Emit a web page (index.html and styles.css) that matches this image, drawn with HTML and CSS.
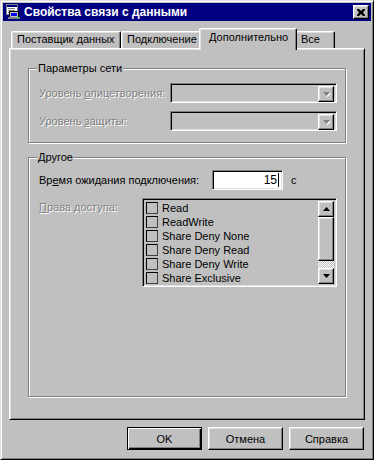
FILE: index.html
```html
<!DOCTYPE html>
<html lang="ru">
<head>
    <meta charset="UTF-8">
    <title>Свойства связи с данными</title>
    <link rel="stylesheet" href="styles.css">
</head>
<body>
    <div class="window">
        <!-- Title bar -->
        <div class="titlebar">
            <svg class="app-icon" width="16" height="16" viewBox="0 0 16 16">
                <rect x="1.5" y="0.5" width="11" height="10" fill="#fff" stroke="#808080"/>
                <rect x="2" y="1" width="10" height="2" fill="#000080"/>
                <rect x="3" y="4" width="7" height="1" fill="#808080"/>
                <rect x="3" y="6" width="7" height="1" fill="#808080"/>
                <rect x="3" y="8" width="5" height="1" fill="#808080"/>
                <rect x="4.5" y="7.5" width="9" height="6" fill="#c0c0c0" stroke="#000"/>
                <rect x="6" y="9" width="6" height="3" fill="#0000ff"/>
                <rect x="3" y="13" width="12" height="2" fill="#808080"/>
                <rect x="12" y="13" width="2" height="1" fill="#00ff00"/>
            </svg>
            <span class="title">Свойства связи с данными</span>
            <div class="close-btn raised">
                <svg width="8" height="7" viewBox="0 0 8 7">
                    <path d="M0 0h2l2 2 2-2h2v1l-2 2.5 2 2.5v1h-2l-2-2-2 2h-2v-1l2-2.5-2-2.5z" fill="#000"/>
                </svg>
            </div>
        </div>

        <div class="content">
            <!-- Tabs -->
            <div class="tabs">
                <div class="tab tab-provider">Поставщик данных</div>
                <div class="tab tab-connection">Подключение</div>
                <div class="tab tab-advanced active">Дополнительно</div>
                <div class="tab tab-all">Все</div>
            </div>

            <div class="panel">
                <!-- Network settings -->
                <div class="group group-net">
                    <div class="legend">Параметры сети</div>
                    <div class="row">
                        <span class="label disabled label-net">Уровень <u>о</u>лицетворения:</span>
                        <div class="combo sunken">
                            <div class="combo-btn raised">
                                <svg width="9" height="6" viewBox="0 0 9 6">
                                    <path d="M2 2h7l-3.5 4z" fill="#fff"/>
                                    <path d="M1 1h7l-3.5 4z" fill="#808080"/>
                                </svg>
                            </div>
                        </div>
                    </div>
                    <div class="row">
                        <span class="label disabled label-net">Уровень <u>з</u>ащиты:</span>
                        <div class="combo sunken">
                            <div class="combo-btn raised">
                                <svg width="9" height="6" viewBox="0 0 9 6">
                                    <path d="M2 2h7l-3.5 4z" fill="#fff"/>
                                    <path d="M1 1h7l-3.5 4z" fill="#808080"/>
                                </svg>
                            </div>
                        </div>
                    </div>
                </div>

                <!-- Other -->
                <div class="group group-other">
                    <div class="legend">Другое</div>
                    <div class="row">
                        <span class="label label-timeout">Вр<u>е</u>мя ожидания подключения:</span>
                        <div class="edit sunken">15<span class="caret"></span></div>
                        <span class="unit">с</span>
                    </div>
                    <div class="row row-top">
                        <span class="label disabled label-access"><u>П</u>рава доступа:</span>
                        <div class="listbox sunken">
                            <ul class="items">
                                <li><span class="check"></span>Read</li>
                                <li><span class="check"></span>ReadWrite</li>
                                <li><span class="check"></span>Share Deny None</li>
                                <li><span class="check"></span>Share Deny Read</li>
                                <li><span class="check"></span>Share Deny Write</li>
                                <li><span class="check"></span>Share Exclusive</li>
                            </ul>
                            <div class="scrollbar">
                                <div class="sb-btn raised">
                                    <svg width="7" height="4" viewBox="0 0 7 4"><path d="M3.5 0l3.5 4h-7z" fill="#000"/></svg>
                                </div>
                                <div class="sb-thumb raised"></div>
                                <div class="sb-track"></div>
                                <div class="sb-btn raised">
                                    <svg width="7" height="4" viewBox="0 0 7 4"><path d="M0 0h7l-3.5 4z" fill="#000"/></svg>
                                </div>
                            </div>
                        </div>
                    </div>
                </div>
            </div>

            <!-- Dialog buttons -->
            <div class="buttons">
                <button class="btn btn-default">OK</button>
                <button class="btn">Отмена</button>
                <button class="btn">Справка</button>
            </div>
        </div>
    </div>
</body>
</html>
```

FILE: styles.css
```css
* {
    box-sizing: border-box;
}

body {
    margin: 0;
    background: #c0c0c0;
    font: 11px "Liberation Sans", Arial, sans-serif;
    color: #000;
}

u {
    text-decoration: underline;
    text-underline-offset: 1px;
}

/* 3D borders */
.raised {
    background: #c0c0c0;
    border: 1px solid;
    border-color: #fff #000 #000 #fff;
    box-shadow: inset -1px -1px #808080, inset 1px 1px #dfdfdf;
}

.sunken {
    border: 1px solid;
    border-color: #808080 #fff #fff #808080;
    box-shadow: inset 1px 1px #000, inset -1px -1px #dfdfdf;
}

.disabled {
    color: #808080;
    text-shadow: 1px 1px 0 #fff;
}

.window {
    width: 374px;
    height: 460px;
    background: #c0c0c0;
    border: 1px solid;
    border-color: #dfdfdf #000 #000 #dfdfdf;
    box-shadow: inset 1px 1px #fff, inset -1px -1px #808080;
    padding: 2px;
}

/* Title bar */
.titlebar {
    height: 18px;
    background: #000080;
    color: #fff;
    display: flex;
    align-items: center;
    padding: 0 2px;
}

.app-icon {
    margin-right: 3px;
    flex-shrink: 0;
}

.title {
    flex: 1;
    font-weight: bold;
    font-size: 12px;
}

.close-btn {
    width: 16px;
    height: 14px;
    display: flex;
    align-items: center;
    justify-content: center;
}

.content {
    padding: 0 6px;
}

/* Tabs */
.tabs {
    display: flex;
    align-items: flex-end;
    height: 27px;
    padding-left: 2px;
}

.tab {
    height: 17px;
    padding-left: 5px;
    line-height: 15px;
    border: 1px solid;
    border-bottom: none;
    border-color: #fff #000 #000 #fff;
    border-radius: 2px 2px 0 0;
    box-shadow: inset -1px 0 #808080, inset 1px 1px #dfdfdf;
    white-space: nowrap;
}

.tab-provider { width: 110px; }
.tab-connection { width: 80px; }
.tab-advanced { width: 94px; }
.tab-all { width: 40px; }

.tab.active {
    position: relative;
    z-index: 1;
    width: 98px;
    height: 22px;
    margin: 0 -2px -2px;
    padding-left: 9px;
    line-height: 17px;
    background: #c0c0c0;
}

.panel {
    height: 372px;
    border: 1px solid;
    border-color: #fff #000 #000 #fff;
    box-shadow: inset 1px 1px #dfdfdf, inset -1px -1px #808080;
    padding: 19px 0 0 18px;
}

/* Group boxes */
.group {
    position: relative;
    width: 318px;
    border: 1px solid #808080;
    box-shadow: inset 1px 1px #fff, 1px 1px #fff;
}

.legend {
    position: absolute;
    top: -7px;
    left: 8px;
    padding: 0 1px;
    line-height: 13px;
    background: #c0c0c0;
}

.group-net {
    padding: 14px 8px 11px 10px;
    display: flex;
    flex-direction: column;
    gap: 8px;
}

.group-other {
    height: 240px;
    margin-top: 14px;
    padding: 12px 8px 0 10px;
    display: flex;
    flex-direction: column;
    gap: 8px;
}

.row {
    display: flex;
    align-items: center;
}

.row-top {
    align-items: flex-start;
}

.label {
    flex-shrink: 0;
    white-space: nowrap;
}

.label-net { width: 131px; }
.label-timeout { width: 173px; }
.label-access {
    width: 103px;
    padding-top: 3px;
}

/* Combo boxes */
.combo {
    width: 167px;
    height: 20px;
    display: flex;
    justify-content: flex-end;
    padding: 2px;
}

.combo-btn {
    width: 16px;
    height: 16px;
    display: flex;
    align-items: center;
    justify-content: center;
}

/* Edit */
.edit {
    width: 71px;
    height: 20px;
    background: #fff;
    display: flex;
    align-items: center;
    justify-content: flex-end;
    padding-right: 3px;
    font-size: 12px;
}

.caret {
    width: 1px;
    height: 14px;
    background: #000;
    margin-left: 1px;
}

.unit {
    margin-left: 8px;
}

/* Checked list box */
.listbox {
    width: 196px;
    height: 89px;
    display: flex;
    padding: 2px;
}

.items {
    flex: 1;
    list-style: none;
    margin: 0;
    padding: 0 0 0 1px;
}

.items li {
    height: 14px;
    display: flex;
    align-items: center;
    line-height: 14px;
}

.check {
    width: 12px;
    height: 12px;
    border: 1px solid #000;
    border-right-color: #404040;
    border-bottom-color: #404040;
    margin-right: 4px;
}

.scrollbar {
    width: 16px;
    display: flex;
    flex-direction: column;
}

.sb-btn {
    height: 16px;
    display: flex;
    align-items: center;
    justify-content: center;
}

.sb-thumb {
    height: 44px;
}

.sb-track {
    flex: 1;
    background: repeating-conic-gradient(#fff 0 25%, #c0c0c0 0 50%) 0 0 / 2px 2px;
}

/* Dialog buttons */
.buttons {
    display: flex;
    justify-content: flex-end;
    gap: 6px;
    margin-top: 7px;
    padding-right: 1px;
}

.btn {
    width: 75px;
    height: 23px;
    font: 11px "Liberation Sans", Arial, sans-serif;
    color: #000;
    background: #c0c0c0;
    border: 1px solid;
    border-color: #fff #000 #000 #fff;
    box-shadow: inset -1px -1px #808080, inset 1px 1px #dfdfdf;
    padding: 0;
}

.btn-default {
    border-color: #000;
    box-shadow: inset 1px 1px #fff, inset -1px -1px #000, inset -2px -2px #808080;
}
```
